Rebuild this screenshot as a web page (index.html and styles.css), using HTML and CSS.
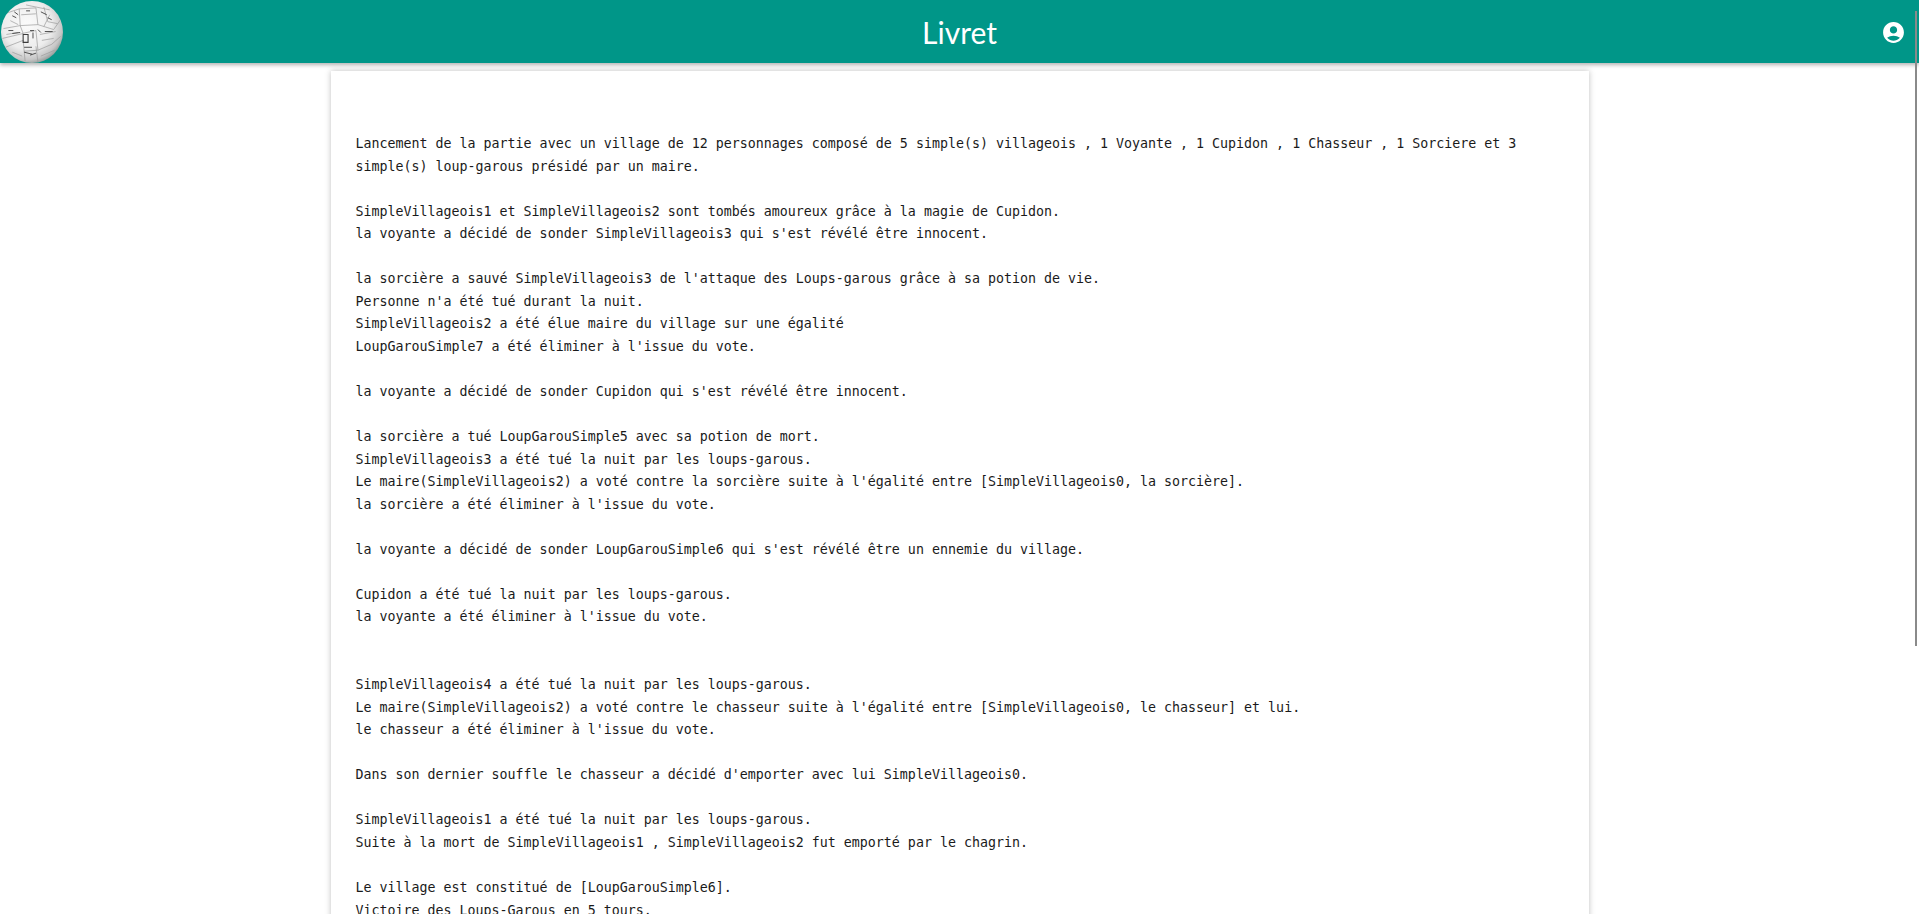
FILE: index.html
```html
<!DOCTYPE html>
<html lang="fr">
<head>
<meta charset="utf-8">
<title>Livret</title>
<link rel="stylesheet" href="styles.css">
</head>
<body>
<header class="topbar">
  <div class="side">
  <svg class="logo" viewBox="0 0 64 64" aria-hidden="true">
    <defs>
      <radialGradient id="globe" cx="0.42" cy="0.38" r="0.66">
        <stop offset="0" stop-color="#fbfbfb"/>
        <stop offset="0.6" stop-color="#ededed"/>
        <stop offset="0.86" stop-color="#c6c6c6"/>
        <stop offset="1" stop-color="#8a9390"/>
      </radialGradient>
      <clipPath id="ball"><circle cx="32" cy="31.500" r="31.500"/></clipPath>
    </defs>
    <circle cx="32" cy="31.500" r="31.500" fill="url(#globe)"/>
    <g clip-path="url(#ball)" fill="none" stroke="#9a9a9a" stroke-width="0.7">
      <path d="M19 8 L36 7 L38 24 L20 25 Z M21 14 L36 13"/>
      <path d="M3 28 L20 25 L23 33 L2 38"/>
      <path d="M7 12 L19 8 M5 47 L23 40 L25 61 M10 20 L18 24"/>
      <path d="M22 33 L36 30 L38 50 L24 51"/>
      <path d="M38 24 L54 29 L61 19"/>
      <path d="M38 50 L52 44 L61 36"/>
      <path d="M36 46 L38 62 M44 6 L48 21 L58 23"/>
      <path d="M40 34 L56 31 M42 40 L54 38 M41 56 L55 50 M12 52 L22 56"/>
      <path d="M26 4 L50 9 M6 34 L18 32 M44 26 L50 14"/>
    </g>
    <g clip-path="url(#ball)" fill="none" stroke="#3c3c3c" stroke-width="0.9">
      <path d="M23 34 L28 34 L28 42 L23 42 Z" stroke-width="1.100"/>
      <path d="M30 30 L34 30 M38 29 L41 32 M45 31 L53 31 M12 33 L20 32 M24 47 L32 47 M24 52 L32 54 M41 11 L47 14 M14 11 L18 14 M26 10 L30 10 M12 15 L16 17 M33 32 L33 38 M30 55 L36 53 M48 17 L52 19 M8 30 L13 30"/>
    </g>
  </svg>
  </div>
  <h1 class="title">Livret</h1>
  <div class="side side-end">
  <svg class="account" viewBox="0 0 24 24" aria-hidden="true">
    <path d="M12 2C6.48 2 2 6.48 2 12s4.48 10 10 10 10-4.48 10-10S17.52 2 12 2zm0 4c1.93 0 3.5 1.57 3.5 3.5S13.93 13 12 13s-3.500-1.570-3.500-3.500S10.070 6 12 6zm0 14c-2.030 0-4.430-.82-6.140-2.880C7.550 15.800 9.680 15 12 15s4.450.8 6.140 2.120C16.430 19.180 14.030 20 12 20z"/>
  </svg>
  </div>
</header>
<div class="scroll-thumb"></div>
<main class="sheet">
<pre class="log">Lancement de la partie avec un village de 12 personnages composé de 5 simple(s) villageois , 1 Voyante , 1 Cupidon , 1 Chasseur , 1 Sorciere et 3
simple(s) loup-garous présidé par un maire.

SimpleVillageois1 et SimpleVillageois2 sont tombés amoureux grâce à la magie de Cupidon.
la voyante a décidé de sonder SimpleVillageois3 qui s'est révélé être innocent.

la sorcière a sauvé SimpleVillageois3 de l'attaque des Loups-garous grâce à sa potion de vie.
Personne n'a été tué durant la nuit.
SimpleVillageois2 a été élue maire du village sur une égalité
LoupGarouSimple7 a été éliminer à l'issue du vote.

la voyante a décidé de sonder Cupidon qui s'est révélé être innocent.

la sorcière a tué LoupGarouSimple5 avec sa potion de mort.
SimpleVillageois3 a été tué la nuit par les loups-garous.
Le maire(SimpleVillageois2) a voté contre la sorcière suite à l'égalité entre [SimpleVillageois0, la sorcière].
la sorcière a été éliminer à l'issue du vote.

la voyante a décidé de sonder LoupGarouSimple6 qui s'est révélé être un ennemie du village.

Cupidon a été tué la nuit par les loups-garous.
la voyante a été éliminer à l'issue du vote.


SimpleVillageois4 a été tué la nuit par les loups-garous.
Le maire(SimpleVillageois2) a voté contre le chasseur suite à l'égalité entre [SimpleVillageois0, le chasseur] et lui.
le chasseur a été éliminer à l'issue du vote.

Dans son dernier souffle le chasseur a décidé d'emporter avec lui SimpleVillageois0.

SimpleVillageois1 a été tué la nuit par les loups-garous.
Suite à la mort de SimpleVillageois1 , SimpleVillageois2 fut emporté par le chagrin.

Le village est constitué de [LoupGarouSimple6].
Victoire des Loups-Garous en 5 tours.</pre>
</main>
</body>
</html>
```
FILE: styles.css
```css
html, body {
  margin: 0;
  height: 100%;
  overflow: hidden;
  background: #fff;
}
.topbar {
  height: 63px;
  background: #009688;
  box-shadow: 0 2px 4px rgba(0, 0, 0, 0.3);
  display: grid;
  grid-template-columns: 1fr auto 1fr;
  align-items: center;
  position: relative;
  z-index: 2;
}
.side {
  display: flex;
  align-items: center;
}
.side-end {
  justify-content: flex-end;
}
.logo {
  width: 64px;
  height: 63px;
  flex: none;
  display: block;
}
.title {
  margin: 0;
  font: 400 30px/65px Lato, "Liberation Sans", sans-serif;
  color: #fff;
  text-align: center;
}
.account {
  width: 25px;
  height: 25px;
  fill: #fff;
  flex: none;
  margin: 0 13px 1px 0;
}
.scroll-thumb {
  position: absolute;
  top: 11px;
  right: 2px;
  width: 2px;
  height: 635px;
  background: #8a8a8a;
  z-index: 3;
}
.sheet {
  width: 1258px;
  height: 900px;
  margin: 8px auto 0;
  padding: 0 25px;
  box-sizing: border-box;
  background: #fff;
  box-shadow: 0 0 6px rgba(0, 0, 0, 0.25);
}
.log {
  margin: 0;
  padding-top: 62px;
  font: 13.3px/22.55px "DejaVu Sans Mono", monospace;
  color: #1a1a1a;
  white-space: pre-wrap;
}
```
